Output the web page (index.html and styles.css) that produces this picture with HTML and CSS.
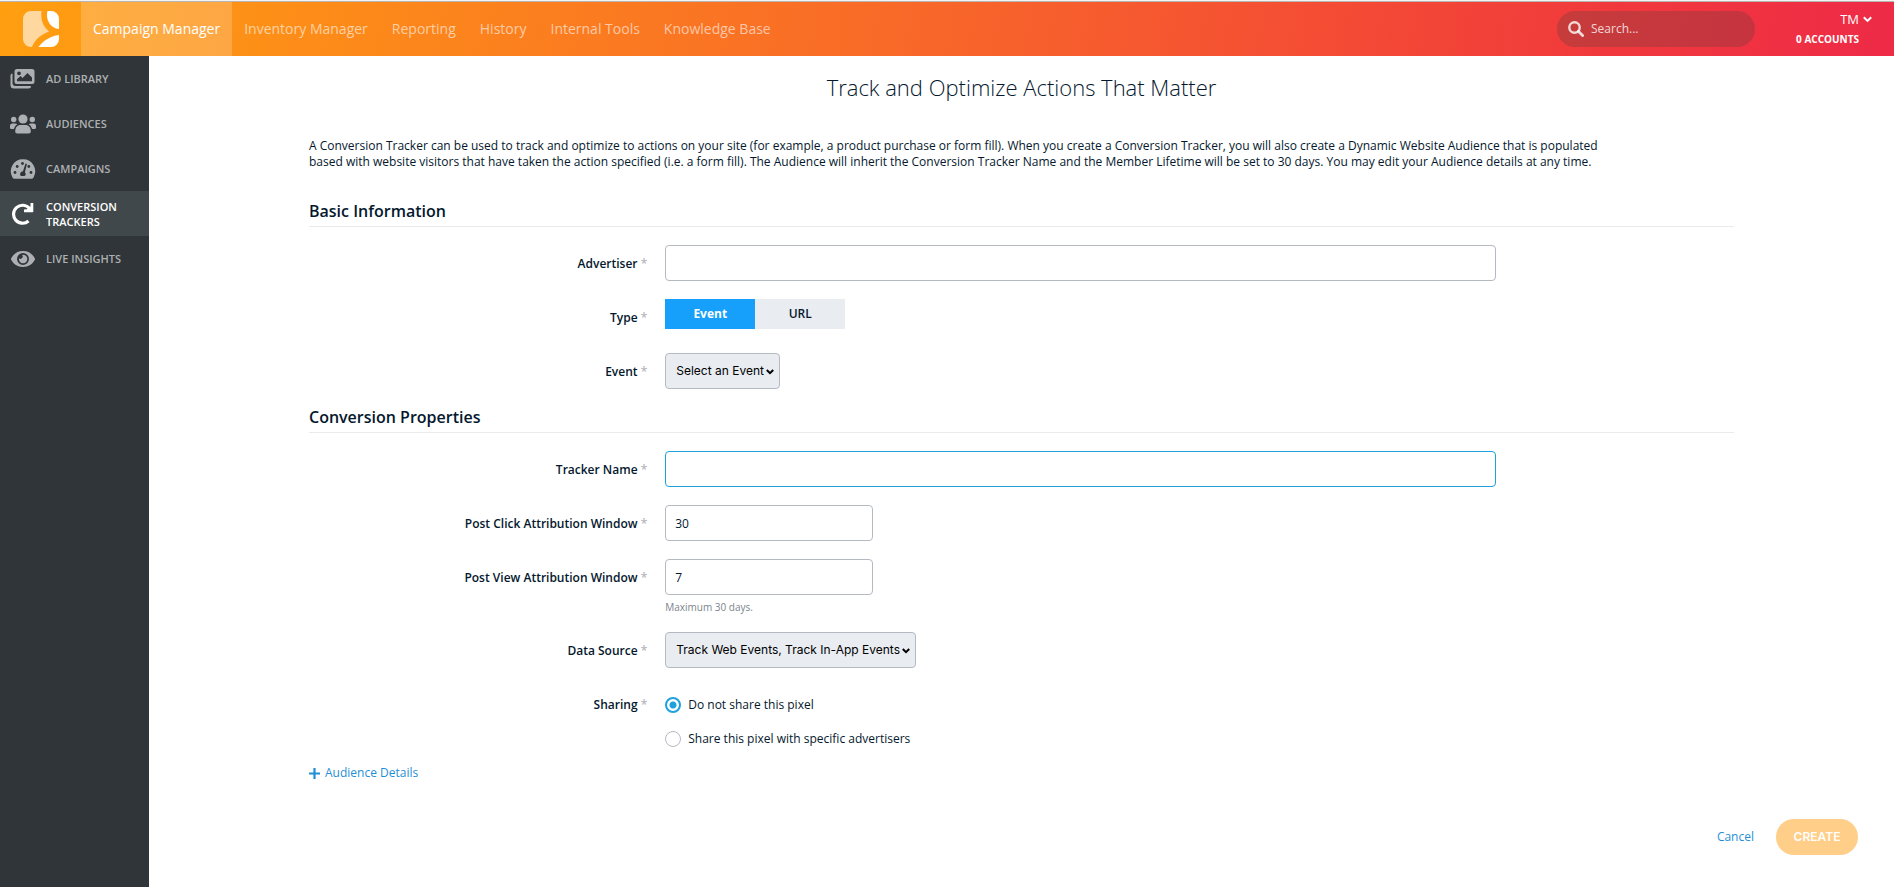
FILE: index.html
```html
<!DOCTYPE html>
<html lang="en">
<head>
<meta charset="utf-8">
<title>Conversion Trackers</title>
<link rel="stylesheet" href="styles.css">
</head>
<body>
<header class="topbar">
  <a class="logo" href="#" aria-label="Home">
    <svg width="36" height="36" viewBox="0 0 36 36">
      <path d="M8 0H18.500C17.500 8 19.500 15 26 20.500C18 23.500 12 28.500 9 36H8A8 8 0 0 1 0 28V8A8 8 0 0 1 8 0Z" fill="#fff" fill-opacity=".6"/>
      <path d="M24.500 0H28A8 8 0 0 1 36 8V18C28 17.500 22 9 24.500 0Z" fill="#fff"/>
      <path d="M36 24V28A8 8 0 0 1 28 36H15.500C20 30 27 25 36 24Z" fill="#fff"/>
    </svg>
  </a>
  <nav class="tabs">
    <a class="tab tab-active" href="#">Campaign Manager</a>
    <a class="tab" href="#">Inventory Manager</a>
    <a class="tab" href="#">Reporting</a>
    <a class="tab" href="#">History</a>
    <a class="tab" href="#">Internal Tools</a>
    <a class="tab" href="#">Knowledge Base</a>
  </nav>
  <label class="search">
    <svg width="16" height="16" viewBox="0 0 16 16" fill="none" stroke="currentColor"><circle cx="6.500" cy="6.500" r="5.200" stroke-width="2.400"/><path d="M10.300 10.300L14.600 14.600" stroke-width="2.800" stroke-linecap="round"/></svg>
    <input class="search-input" type="text" placeholder="Search..." aria-label="Search">
  </label>
  <div class="account">
    <button class="account-name" type="button">TM
      <svg width="9" height="7" viewBox="0 0 9 7" fill="none" stroke="currentColor" stroke-width="2"><path d="M.8 1.200L4.500 4.900L8.200 1.200"/></svg>
    </button>
    <span class="account-count">0 ACCOUNTS</span>
  </div>
</header>
<div class="shell">
  <nav class="sidebar">
    <a class="side-item" href="#">
      <svg class="side-icon" viewBox="0 0 26 20" fill="currentColor"><path fill-rule="evenodd" d="M7 0H22A2.500 2.500 0 0 1 24.500 2.500V12.500A2.500 2.500 0 0 1 22 15H7A2.500 2.500 0 0 1 4.500 12.500V2.500A2.500 2.500 0 0 1 7 0ZM7 12.200H22V8.500L17.500 4L12.500 9L10.500 7L7 10.300ZM9 2.400A1.900 1.900 0 1 0 9 6.200A1.900 1.900 0 0 0 9 2.400Z"/><path d="M2.500 4.500V14A3 3 0 0 0 5.500 17H21A2.500 2.500 0 0 1 18.500 19.500H4A3.500 3.500 0 0 1 .5 16V6.500A2 2 0 0 1 2.500 4.500Z"/></svg>
      <span>AD LIBRARY</span>
    </a>
    <a class="side-item" href="#">
      <svg class="side-icon" viewBox="0 0 26 20" fill="currentColor"><circle cx="13" cy="5" r="4.600"/><circle cx="3.700" cy="5.500" r="2.700"/><circle cx="22.300" cy="5.500" r="2.700"/><path d="M5.200 17.500C5.200 13.300 7.500 11 10.500 11H15.500C18.500 11 20.800 13.300 20.800 17.500Q20.800 19.500 18.800 19.500H7.200Q5.200 19.500 5.200 17.500Z"/><path d="M2.500 9.500H5Q6.500 9.500 7.200 10.300Q4.200 12.200 3.800 15H1.300Q0 15 0 13.500V12Q0 9.500 2.500 9.500Z"/><path d="M23.500 9.500H21Q19.500 9.500 18.800 10.300Q21.800 12.200 22.200 15H24.700Q26 15 26 13.500V12Q26 9.500 23.500 9.500Z"/></svg>
      <span>AUDIENCES</span>
    </a>
    <a class="side-item" href="#">
      <svg class="side-icon" viewBox="0 0 26 20"><path d="M13 .3A12 12 0 0 1 23.500 18.400Q22.900 19.700 21.500 19.700H4.500Q3.100 19.700 2.500 18.400A12 12 0 0 1 13 .3Z" fill="currentColor"/><g class="dial-marks"><circle cx="5" cy="13.500" r="1.400"/><circle cx="7.200" cy="7.500" r="1.400"/><circle cx="12.500" cy="4.500" r="1.400"/><circle cx="18.800" cy="7.500" r="1.400"/><circle cx="21" cy="13.500" r="1.400"/><path d="M15.500 4.500L17 5L14.900 13.200A2.600 2.600 0 0 1 14.500 17H10.800A2.600 2.600 0 0 1 12.900 12.600Z"/></g></svg>
      <span>CAMPAIGNS</span>
    </a>
    <a class="side-item side-item-active" href="#">
      <svg class="side-icon side-icon-tall" viewBox="0 0 26 22"><path d="M19.500 5.500A9 9 0 1 0 18.500 18" fill="none" stroke="currentColor" stroke-width="3.200"/><path d="M20.500 0H23.300V8.500Q23.300 9.300 22.500 9.300H14V6.500L17 6.200L20.500 3.500Z" fill="currentColor"/></svg>
      <span>CONVERSION TRACKERS</span>
    </a>
    <a class="side-item" href="#">
      <svg class="side-icon" viewBox="0 0 26 20"><path fill-rule="evenodd" fill="currentColor" d="M13 2C18.500 2 22.600 5 24.800 9.200Q25.200 10 24.800 10.800C22.600 15 18.500 18 13 18C7.500 18 3.400 15 1.200 10.800Q.8 10 1.200 9.200C3.400 5 7.500 2 13 2ZM13 4A6 6 0 1 0 13 16A6 6 0 0 0 13 4Z"/><path fill="currentColor" d="M12 6A4.200 4.200 0 1 1 9 9.200A2.100 2.100 0 1 0 12 6Z"/></svg>
      <span>LIVE INSIGHTS</span>
    </a>
  </nav>
  <main class="page">
    <form class="form">
      <h1 class="title">Track and Optimize Actions That Matter</h1>
      <p class="intro">A Conversion Tracker can be used to track and optimize to actions on your site (for example, a product purchase or form fill). When you create a Conversion Tracker, you will also create a Dynamic Website Audience that is populated based with website visitors that have taken the action specified (i.e. a form fill). The Audience will inherit the Conversion Tracker Name and the Member Lifetime will be set to 30 days. You may edit your Audience details at any time.</p>

      <h2 class="section">Basic Information</h2>
      <div class="row">
        <label class="label" for="advertiser">Advertiser <span class="star">*</span></label>
        <div class="field"><input class="input" id="advertiser" type="text"></div>
      </div>
      <div class="row">
        <span class="label" id="type-label">Type <span class="star">*</span></span>
        <div class="field toggle" role="group" aria-labelledby="type-label">
          <button class="toggle-btn toggle-on" type="button">Event</button>
          <button class="toggle-btn" type="button">URL</button>
        </div>
      </div>
      <div class="row">
        <label class="label" for="event">Event <span class="star">*</span></label>
        <div class="field">
          <div class="picker">
            <select class="select" id="event"><option>Select an Event</option></select>
            <svg class="chevron" width="8" height="6" viewBox="0 0 8 6"><path d="M.8 1L4 4.200L7.200 1"/></svg>
          </div>
        </div>
      </div>

      <h2 class="section">Conversion Properties</h2>
      <div class="row">
        <label class="label" for="tracker">Tracker Name <span class="star">*</span></label>
        <div class="field"><input class="input input-focus" id="tracker" type="text"></div>
      </div>
      <div class="row">
        <label class="label" for="click">Post Click Attribution Window <span class="star">*</span></label>
        <div class="field"><input class="input input-short" id="click" type="text" value="30"></div>
      </div>
      <div class="row">
        <label class="label" for="view">Post View Attribution Window <span class="star">*</span></label>
        <div class="field"><input class="input input-short" id="view" type="text" value="7"><p class="hint">Maximum 30 days.</p></div>
      </div>
      <div class="row">
        <label class="label" for="source">Data Source <span class="star">*</span></label>
        <div class="field">
          <div class="picker">
            <select class="select" id="source"><option>Track Web Events, Track In-App Events</option></select>
            <svg class="chevron" width="8" height="6" viewBox="0 0 8 6"><path d="M.8 1L4 4.200L7.200 1"/></svg>
          </div>
        </div>
      </div>
      <div class="row">
        <span class="label" id="share-label">Sharing <span class="star">*</span></span>
        <div class="field choices" role="radiogroup" aria-labelledby="share-label">
          <label class="choice"><input class="radio" type="radio" name="share" checked>Do not share this pixel</label>
          <label class="choice"><input class="radio" type="radio" name="share">Share this pixel with specific advertisers</label>
        </div>
      </div>
      <a class="link more" href="#"><svg width="11" height="11" viewBox="0 0 11 11"><path d="M5.500 0V11M0 5.500H11" stroke="currentColor" stroke-width="2.200"/></svg>Audience Details</a>
    </form>
    <footer class="actions">
      <a class="link" href="#">Cancel</a>
      <button class="create" type="button" disabled>CREATE</button>
    </footer>
  </main>
</div>
</body>
</html>
```
FILE: styles.css
```css
* { box-sizing: border-box; }
body {
  margin: 0;
  min-height: 100vh;
  display: flex;
  flex-direction: column;
  border-top: 1px solid #f4f4f4;
  background: #fff;
  color: #04182e;
  font: 12px/16px "Open Sans", "Noto Sans", sans-serif;
}
a { text-decoration: none; }
button, input, select { font: inherit; }

.topbar {
  display: flex;
  align-items: center;
  height: 55px;
  border-top: 1px solid #b8b4b0;
  background: linear-gradient(100deg, #ff9f10 0%, #f96c27 45%, #f13a3c 84%, #ee2a47 100%);
}
.logo { display: flex; padding: 0 22px 0 23px; }
.tabs { display: flex; align-self: stretch; }
.tab {
  display: flex;
  align-items: center;
  padding: 0 12px;
  font-size: 14px;
  color: rgba(255, 255, 255, .6);
}
.tab-active { background: rgba(255, 255, 255, .2); color: #fff; font-weight: 500; }
.search {
  display: flex;
  align-items: center;
  gap: 7px;
  width: 198px;
  height: 36px;
  margin-left: auto;
  padding: 0 11px;
  border-radius: 18px;
  background: rgba(70, 60, 60, .25);
  color: rgba(255, 255, 255, .8);
}
.search-input { flex: 1; min-width: 0; padding: 0; border: 0; outline: 0; background: none; color: #fff; }
.search-input::placeholder { color: rgba(255, 255, 255, .8); opacity: 1; }
.account {
  display: flex;
  flex-direction: column;
  align-items: flex-end;
  gap: 4px;
  width: 117px;
  margin-right: 22px;
  color: #fff;
}
.account-name {
  display: flex;
  align-items: center;
  gap: 4px;
  padding: 0;
  border: 0;
  background: none;
  color: #fff;
  font-size: 13px;
  line-height: 16px;
}
.account-count { padding-right: 13px; font-size: 10px; font-weight: 700; }

.shell { display: flex; flex: 1; }
.sidebar { flex: none; width: 149px; background: #303539; }
.side-item {
  display: flex;
  align-items: center;
  gap: 10px;
  height: 45px;
  padding: 0 10px;
  color: #adb0b2;
  font-size: 11px;
  font-weight: 600;
  line-height: 15px;
}
.side-icon { flex: none; width: 26px; height: 20px; }
.side-icon-tall { height: 22px; }
.side-item-active { background: #41484b; color: #fff; }
.dial-marks { fill: #303539; }

.page { flex: 1; display: flex; flex-direction: column; }
.form { padding: 0 160px; }
.title { margin: 16px 0 0; text-align: center; font-size: 22px; font-weight: 300; line-height: 30px; }
.intro { max-width: 1310px; margin: 36px 0 0; }
.section {
  margin: 30px 0 9px;
  padding-bottom: 4px;
  border-bottom: 1px solid #e8eaec;
  font-size: 16px;
  font-weight: 600;
  line-height: 22px;
}
.row + .section { margin-top: 8px; }
.row { display: grid; grid-template-columns: 3fr 9fr; padding: 9px 0; }
.label { padding: 10px 18px 0 0; text-align: right; font-weight: 600; line-height: 18px; }
.star { color: #b4b9c0; }
.field { width: 77.700%; }
.input {
  display: block;
  width: 100%;
  height: 36px;
  padding: 0 9px;
  border: 1px solid #b4b9c2;
  border-radius: 4px;
  outline: 0;
  background: #fff;
  color: #04182e;
}
.input-focus { border-color: #1ea1dc; }
.input-short { width: 25%; }
.toggle { display: flex; height: 36px; align-items: flex-start; }
.toggle-btn {
  width: 90px;
  height: 30px;
  padding: 0;
  border: 0;
  background: #e9ecf1;
  color: #04182e;
  font-weight: 600;
}
.toggle-on { background: #16a0fb; color: #fff; font-weight: 700; }
.picker { position: relative; display: inline-block; vertical-align: top; }
.select {
  appearance: none;
  height: 36px;
  padding: 0 15px 0 10px;
  border: 1px solid #b4b9c2;
  border-radius: 4px;
  background: #e9ecf1;
  color: #000;
  font-family: Inter, "Liberation Sans", sans-serif;
}
.chevron {
  position: absolute;
  right: 6px;
  top: 16px;
  fill: none;
  stroke: #000;
  stroke-width: 2;
  pointer-events: none;
}
.hint { margin: 4px 0 -1px; color: #7b848e; font-size: 10px; line-height: 16px; }
.choices { display: flex; flex-direction: column; gap: 18px; padding-top: 11px; }
.choice { display: flex; align-items: center; gap: 7px; }
.radio {
  appearance: none;
  width: 16px;
  height: 16px;
  margin: 0;
  border: 1px solid #b4b9c2;
  border-radius: 50%;
  background: #fff;
}
.radio:checked { border: 2px solid #1ea1dc; background: radial-gradient(circle, #1ea1dc 3px, #fff 4px); }
.link { color: #1f8fd6; }
.more { display: inline-flex; align-items: center; gap: 5px; margin-top: 9px; }
.actions { display: flex; align-items: center; justify-content: flex-end; gap: 22px; padding: 36px 36px 32px; }
.create {
  width: 82px;
  height: 36px;
  padding: 0;
  border: 0;
  border-radius: 18px;
  background: #ffce88;
  color: #fff;
  font: 600 12px/16px Inter, "Liberation Sans", sans-serif;
}
```
